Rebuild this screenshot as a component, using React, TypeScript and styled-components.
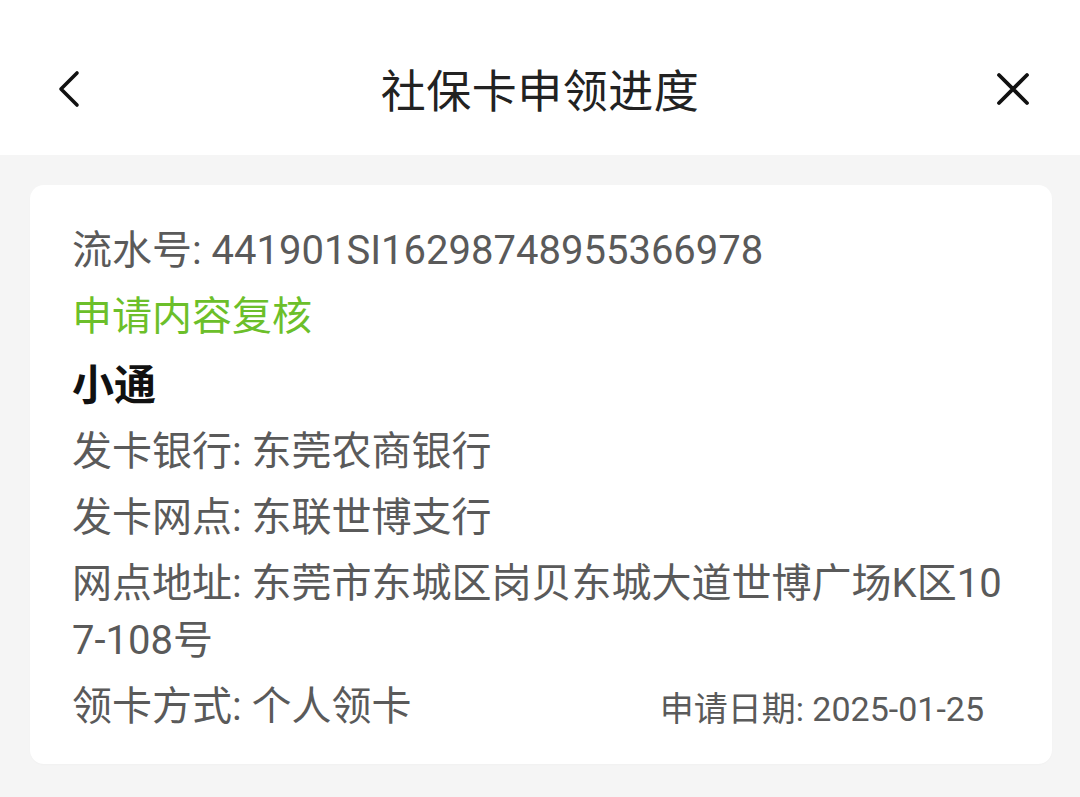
import React from "react";
import styled, { createGlobalStyle } from "styled-components";

const Global = createGlobalStyle`
  html, body { margin: 0; padding: 0; background: #f5f5f5; }
  body { font-family: Roboto, "Noto Sans CJK SC", sans-serif; }
`;

const Page = styled.div`
  width: 1080px;
  height: 797px;
  background: #f5f5f5;
  display: flex;
  flex-direction: column;
  overflow: hidden;
`;

const Header = styled.header`
  height: 155px;
  box-sizing: border-box;
  padding-top: 22px;
  background: #ffffff;
  display: grid;
  grid-template-columns: 120px 1fr 120px;
  align-items: center;
  flex-shrink: 0;
`;

const IconButton = styled.div<{ $align: "start" | "end" }>`
  display: flex;
  justify-content: ${(p) => (p.$align === "start" ? "flex-start" : "flex-end")};
  padding: ${(p) => (p.$align === "start" ? "0 0 0 56px" : "0 50px 0 0")};
`;

const Title = styled.h1`
  margin: 0;
  text-align: center;
  font-family: Roboto, "Noto Sans CJK SC", sans-serif;
  font-weight: 400;
  font-size: 45px;
  color: #222222;
  letter-spacing: 0.5px;
`;

const Body = styled.main`
  padding: 30px 28px 0 30px;
`;

const Card = styled.section`
  background: #ffffff;
  border-radius: 14px;
  padding: 37px 30px 20px 42px;
  display: flex;
  flex-direction: column;
  gap: 9px;
  height: 522px;
  box-shadow: 0 1px 2px rgba(0, 0, 0, 0.02);
`;

const Line = styled.div<{ $tone?: "gray" | "green" | "black" }>`
  font-family: Roboto, "Noto Sans CJK SC", sans-serif;
  font-size: ${(p) => (p.$tone === "black" ? "42px" : "40px")};
  line-height: 57px;
  color: ${(p) =>
    p.$tone === "green" ? "#6cbf2a" : p.$tone === "black" ? "#111111" : "#5a5a5a"};
  font-weight: ${(p) => (p.$tone === "black" ? 700 : 400)};
  margin-top: ${(p) => (p.$tone === "black" ? "3px" : "0")};
  word-break: break-all;
`;

const Bottom = styled.div`
  display: flex;
  justify-content: space-between;
  align-items: center;
`;

const DateText = styled.span`
  font-family: Roboto, "Noto Sans CJK SC", sans-serif;
  font-size: 34px;
  color: #5a5a5a;
  margin-right: 38px;
`;

export default function App() {
  return (
    <>
      <Global />
      <Page>
        <Header>
          <IconButton $align="start">
            <svg width="26" height="38" viewBox="0 0 26 38">
              <path d="M21 3 L5 19 L21 35" fill="none" stroke="#111" strokeWidth="3.6" strokeLinecap="round" strokeLinejoin="round" />
            </svg>
          </IconButton>
          <Title>社保卡申领进度</Title>
          <IconButton $align="end">
            <svg width="34" height="34" viewBox="0 0 34 34">
              <path d="M3 3 L31 31 M31 3 L3 31" fill="none" stroke="#111" strokeWidth="3.8" strokeLinecap="round" />
            </svg>
          </IconButton>
        </Header>
        <Body>
          <Card>
            <Line>流水号: 441901SI16298748955366978</Line>
            <Line $tone="green">申请内容复核</Line>
            <Line $tone="black">小通</Line>
            <Line>发卡银行: 东莞农商银行</Line>
            <Line>发卡网点: 东联世博支行</Line>
            <Line>网点地址: 东莞市东城区岗贝东城大道世博广场K区10<br />7-108号</Line>
            <Bottom>
              <Line>领卡方式: 个人领卡</Line>
              <DateText>申请日期: 2025-01-25</DateText>
            </Bottom>
          </Card>
        </Body>
      </Page>
    </>
  );
}
